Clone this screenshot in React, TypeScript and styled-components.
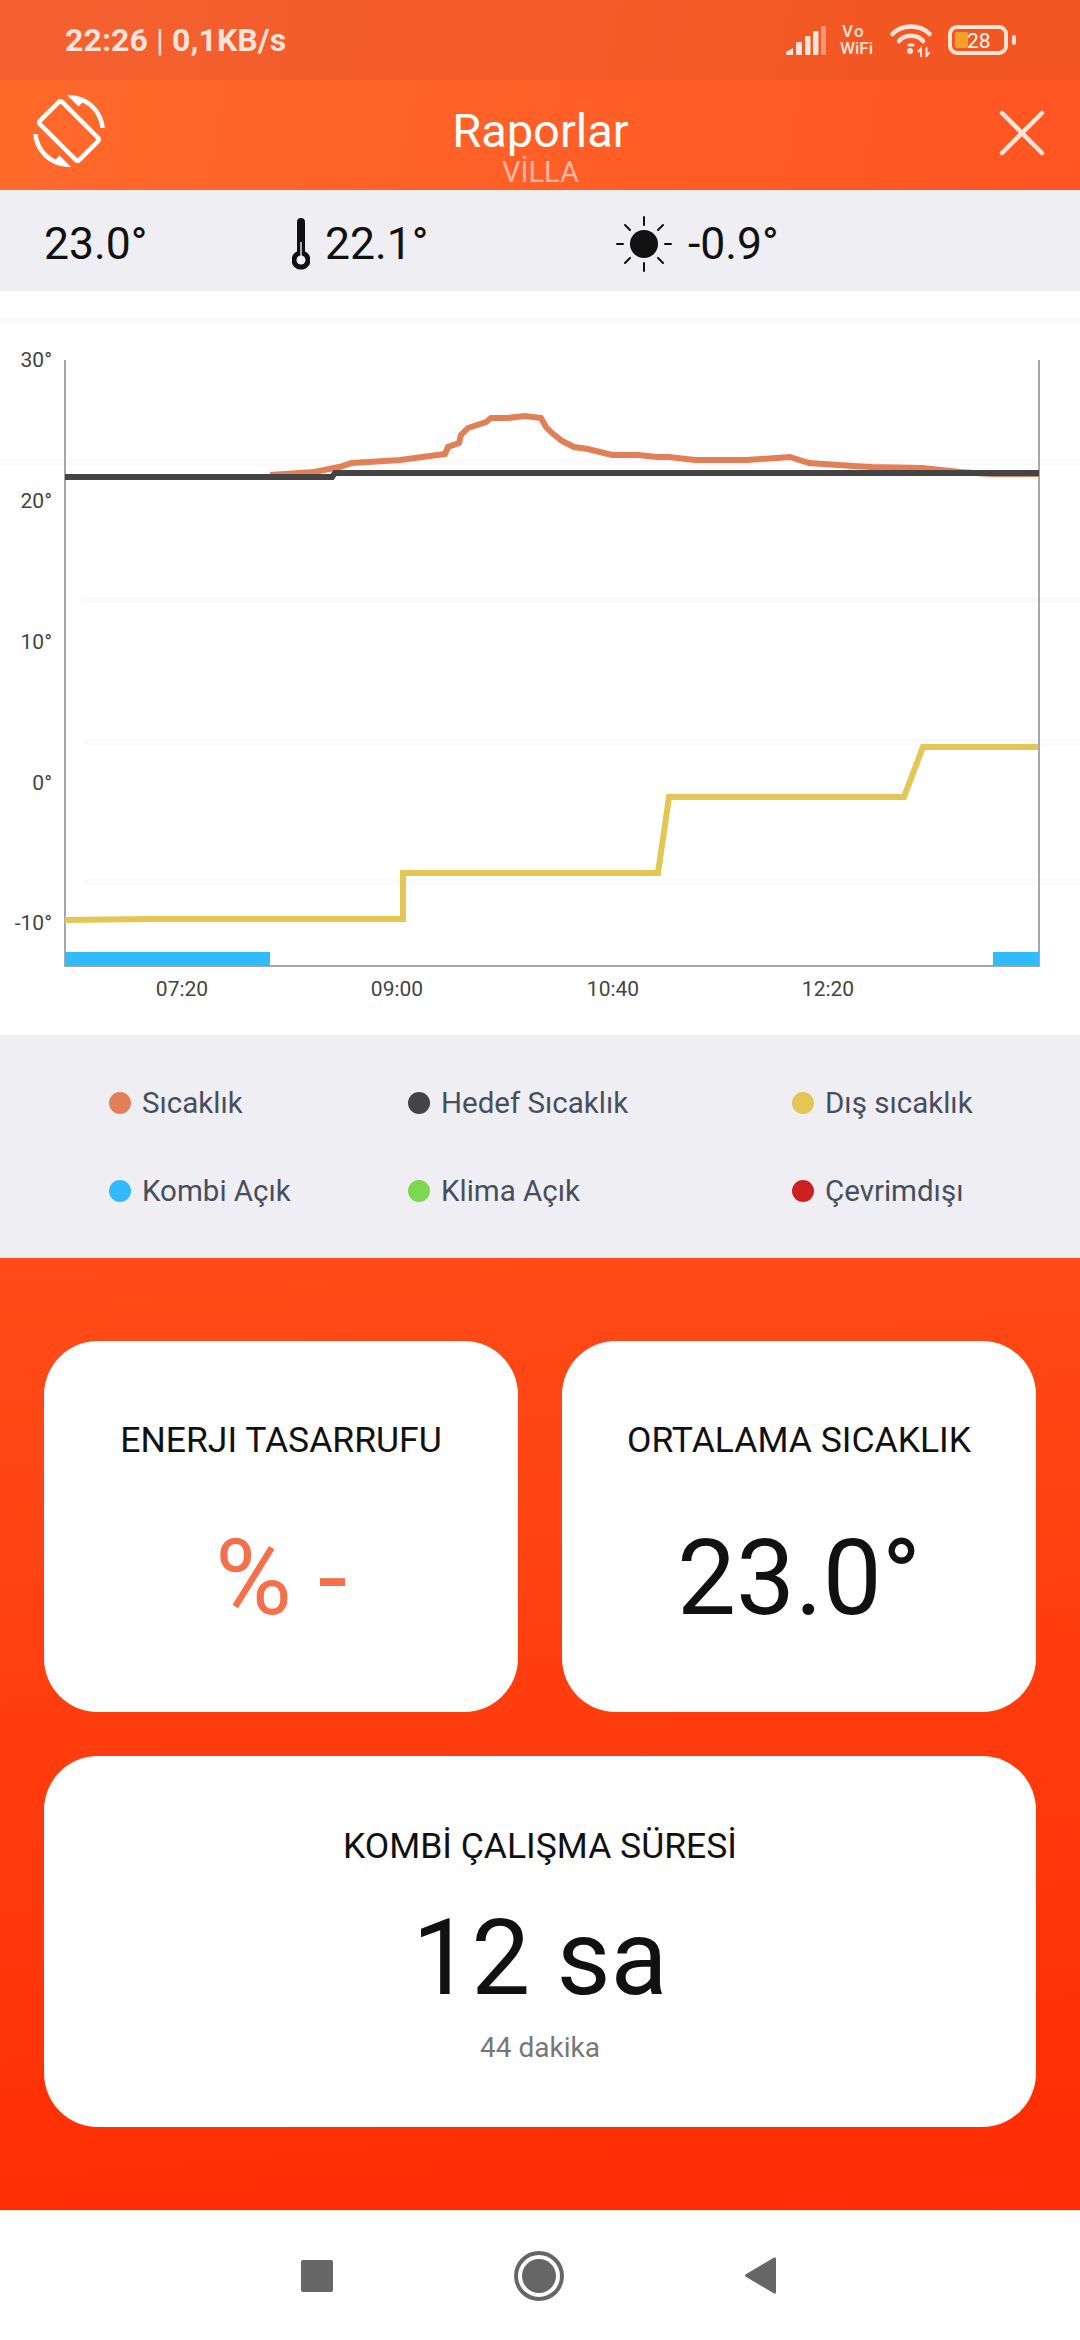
import React from "react";
import styled, { createGlobalStyle } from "styled-components";

const Global = createGlobalStyle`
  html, body { margin: 0; padding: 0; background: #fff; }
  * { box-sizing: border-box; }
  body { font-family: Roboto, "Noto Sans", sans-serif; }
`;
const Page = styled.div`width:1080px;height:2340px;display:flex;flex-direction:column;overflow:hidden;background:#fff;`;
const StatusBar = styled.div`height:80px;display:flex;align-items:center;justify-content:space-between;padding:0 64px 0 65px;background:linear-gradient(100deg,#f46130,#f25520);color:#fde3d8;`;
const StatusText = styled.div`font-size:32px;font-weight:700;letter-spacing:.1px;`;
const Separator = styled.span`font-weight:400;`;
const StatusIcons = styled.div`display:flex;align-items:center;gap:14px;`;
const VoWifiLabel = styled.div`width:36px;display:flex;flex-direction:column;align-items:flex-start;font-size:17px;font-weight:500;line-height:17px;color:#fde3d8;white-space:nowrap;`;
const VoLine = styled.span`letter-spacing:1.5px;padding-left:2px;`;
const Header = styled.div`height:110px;display:grid;grid-template-columns:1fr auto 1fr;align-items:center;padding:0 35px 6px 33px;background:linear-gradient(100deg,#ff6a2b,#ff5522);`;
const HeaderEnd = styled.div`display:flex;justify-content:flex-end;`;
const TitleBlock = styled.div`align-self:start;padding:25px 0 0 3px;display:flex;flex-direction:column;align-items:center;color:#fff;`;
const Title = styled.div`font-size:47px;line-height:52px;`;
const Subtitle = styled.div`font-size:29px;line-height:26px;color:#ffb9a0;margin-top:2px;`;
const StatsBar = styled.div`height:101px;background:#efeff3;display:grid;grid-template-columns:248px 324px 1fr;align-items:center;padding:6px 0 0 44px;color:#111;font-size:44.5px;`;
const Stat = styled.div`display:flex;align-items:center;`;
const ChartArea = styled.div`height:744px;background:#fff;`;
const Legend = styled.div`height:223px;background:#efeff3;display:grid;grid-template-columns:299px 384px 1fr;grid-template-rows:88px 88px;align-content:center;padding:0 0 0 109px;`;
const LegendItem = styled.div`display:flex;align-items:center;gap:11px;font-size:29.5px;color:#474e5e;`;
const Dot = styled.span<{ $c: string }>`width:22px;height:22px;border-radius:50%;background:${(p) => p.$c};`;
const Reports = styled.div`height:952px;background:linear-gradient(175deg,#ff4c18,#ff2c03);padding:83px 44px 0;display:grid;grid-template-columns:474px 474px;grid-template-rows:371px 371px;gap:44px;`;
const Card = styled.div<{ $wide?: boolean }>`background:#fff;border-radius:54px;display:flex;flex-direction:column;align-items:center;${(p) => (p.$wide ? "grid-column:1 / span 2;" : "")}`;
const CardTitle = styled.div<{ $wide?: boolean }>`font-size:35.5px;color:#111;line-height:40px;margin-top:${(p) => (p.$wide ? "70px" : "79px")};`;
const Big = styled.div<{ $accent?: boolean; $wide?: boolean }>`font-size:105px;line-height:120px;color:${(p) => (p.$accent ? "#f4704a" : "#111")};margin-top:${(p) => (p.$wide ? "33px" : "59px")};`;
const Note = styled.div`font-size:28px;color:#777;line-height:32px;margin-top:13px;`;
const NavBar = styled.div`flex:1;background:#fff;border-top:1px solid #f5e6e0;display:flex;justify-content:center;align-items:center;gap:181px;padding-right:3px;`;

const temp = "270,475 314,472 339,467 352,463 400,460 445,454 448,447 459,443 461,435 468,428 486,422 491,418 507,418 525,416 541,418 546,427 552,433 562,441 574,447 588,449 612,455 638,455 657,457 669,457 695,460 747,460 790,457 809,463 853,466 872,467 922,468 960,472 991,474 1038,474";
const target = "65,477 332,477 335,473 1039,473";
const outside = "65,920 148,919 403,919 403,873 658,873 669,797 904,797 923,747 1038,747";

function Rotate() {
  return (
    <svg width="72" height="72" viewBox="0 0 24 24" fill="#fff">
      <path d="M16.48 2.52c3.27 1.55 5.61 4.72 5.97 8.48h1.5C23.44 4.84 18.29 0 12 0l-.66.03 3.81 3.81 1.33-1.32zm-6.25-.77c-.59-.59-1.54-.59-2.12 0L1.75 8.11c-.59.59-.59 1.54 0 2.12l12.02 12.02c.59.59 1.54.59 2.12 0l6.36-6.36c.59-.59.59-1.54 0-2.12L10.23 1.75zm4.6 19.44L2.81 9.17l6.36-6.36 12.02 12.02-6.36 6.36zm-7.31.29C4.25 19.94 1.91 16.76 1.55 13H.05C.56 19.16 5.71 24 12 24l.66-.03-3.81-3.81-1.33 1.32z" />
    </svg>
  );
}
function Close() {
  return (
    <svg width="46" height="46" viewBox="0 0 46 46" stroke="#ffe4da" strokeWidth="4.5" strokeLinecap="round">
      <path d="M3 3L43 43M43 3L3 43" />
    </svg>
  );
}
function Signal() {
  return (
    <svg width="40" height="29" viewBox="0 0 40 29" fill="#fde3d8">
      <path d="M0 26l7-4v7H1a1 1 0 0 1-1-1z" /><rect x="10" y="16" width="6" height="13" rx="1" /><rect x="19" y="10" width="5.5" height="19" rx="1" /><rect x="27" y="5" width="5.5" height="24" rx="1" /><rect x="35" y="0" width="5" height="29" rx="1" opacity=".45" />
    </svg>
  );
}
function VoWifi() {
  return (
    <VoWifiLabel><VoLine>Vo</VoLine><span>WiFi</span></VoWifiLabel>
  );
}
function Wifi() {
  return (
    <svg width="42" height="33" viewBox="0 0 42 33" fill="none" stroke="#fde3d8" strokeWidth="4.5" strokeLinecap="round">
      <path d="M2.5 10C12 0 30 0 39.5 10" /><path d="M9 17C15 10 27 10 33 17" />
      <path d="M19 21h4" strokeWidth="3" />
      <circle cx="20" cy="27" r="3" fill="#fde3d8" stroke="none" />
      <path d="M31 32.500v-8l-2.500 3M36.500 24v8l2.500-3" strokeWidth="2" />
    </svg>
  );
}
function Battery() {
  return (
    <svg width="68" height="30" viewBox="0 0 68 30" style={{ marginLeft: 2 }}>
      <rect x="2" y="2" width="56" height="26" rx="7" fill="none" stroke="#fde3d8" strokeWidth="4" />
      <rect x="7" y="7" width="13" height="16" rx="2" fill="#f6a02a" />
      <text x="19" y="23" fontFamily="Roboto" fontSize="21" fill="#fff">28</text>
      <rect x="64" y="10" width="4" height="10" rx="2" fill="#fde3d8" />
    </svg>
  );
}
function Thermo() {
  return (
    <svg width="18" height="52" viewBox="0 0 18 52" style={{ marginRight: 15 }}>
      <path d="M5 4a4 4 0 0 1 8 0v29.500a9.500 9.500 0 1 1-8 0z" fill="#111" />
      <circle cx="9" cy="42" r="4.500" fill="#efeff3" />
      <rect x="8.300" y="24" width="1.400" height="16" fill="#efeff3" />
    </svg>
  );
}
function Sun() {
  return (
    <svg width="56" height="56" viewBox="0 0 56 56" stroke="#111" strokeWidth="2" strokeLinecap="round" style={{ marginRight: 16 }}>
      <circle cx="28" cy="28" r="14" fill="#111" stroke="none" />
      <path d="M28 1v8M28 47v8M1 28h6M49 28h6M9 9l5 5M47 9l-5 5M9 47l5-5M47 47l-5-5" />
    </svg>
  );
}
function Chart() {
  const label = { fontFamily: "Roboto", fontSize: 21, fill: "#444" };
  return (
    <svg width="1080" height="744" viewBox="0 291 1080 744">
      <g fill="#fafafa">
        <rect x="0" y="318" width="1080" height="6" />
        <rect x="0" y="459" width="1080" height="6" />
        <rect x="83" y="597" width="997" height="6" />
        <rect x="83" y="739" width="997" height="6" />
        <rect x="83" y="879" width="997" height="6" />
      </g>
      <path d="M65 360V966H1039V360" fill="none" stroke="#8a8a8a" strokeWidth="1.5" />
      <rect x="65" y="952" width="205" height="14" fill="#31bafc" />
      <rect x="993" y="952" width="46" height="14" fill="#31bafc" />
      <polyline points={temp} fill="none" stroke="#e37f56" strokeWidth="6" />
      <polyline points={target} fill="none" stroke="#444444" strokeWidth="6" />
      <polyline points={outside} fill="none" stroke="#e4c654" strokeWidth="6" />
      <g {...label} textAnchor="end">
        <text x="52" y="367">30°</text>
        <text x="52" y="508">20°</text>
        <text x="52" y="649">10°</text>
        <text x="52" y="790">0°</text>
        <text x="52" y="930">-10°</text>
      </g>
      <g {...label} textAnchor="middle">
        <text x="182" y="996">07:20</text>
        <text x="397" y="996">09:00</text>
        <text x="613" y="996">10:40</text>
        <text x="828" y="996">12:20</text>
      </g>
    </svg>
  );
}
function NavSquare() {
  return <svg width="32" height="32" viewBox="0 0 32 32"><rect width="32" height="32" rx="2" fill="#666" /></svg>;
}
function NavHome() {
  return (
    <svg width="50" height="50" viewBox="0 0 50 50">
      <circle cx="25" cy="25" r="23" fill="none" stroke="#666" strokeWidth="4" />
      <circle cx="25" cy="25" r="17" fill="#666" />
    </svg>
  );
}
function NavBack() {
  return <svg width="31" height="37" viewBox="0 0 31 37"><path d="M29 .6a1.300 1.300 0 0 1 2 1v33.800a1.300 1.300 0 0 1-2 1L.8 19.700a1.300 1.300 0 0 1 0-2.400z" fill="#666" /></svg>;
}

const legend = [
  ["Sıcaklık", "#e37f56"],
  ["Hedef Sıcaklık", "#444444"],
  ["Dış sıcaklık", "#e4c654"],
  ["Kombi Açık", "#31bafc"],
  ["Klima Açık", "#7bd850"],
  ["Çevrimdışı", "#cf2020"],
];

export default function App() {
  return (
    <Page>
      <Global />
      <StatusBar>
        <StatusText>22:26 <Separator>|</Separator> 0,1KB/s</StatusText>
        <StatusIcons><Signal /><VoWifi /><Wifi /><Battery /></StatusIcons>
      </StatusBar>
      <Header>
        <div><Rotate /></div>
        <TitleBlock><Title>Raporlar</Title><Subtitle>VİLLA</Subtitle></TitleBlock>
        <HeaderEnd><Close /></HeaderEnd>
      </Header>
      <StatsBar>
        <Stat>23.0°</Stat>
        <Stat><Thermo />22.1°</Stat>
        <Stat><Sun />-0.9°</Stat>
      </StatsBar>
      <ChartArea><Chart /></ChartArea>
      <Legend>
        {legend.map(([t, c]) => (
          <LegendItem key={t}><Dot $c={c} />{t}</LegendItem>
        ))}
      </Legend>
      <Reports>
        <Card><CardTitle>ENERJI TASARRUFU</CardTitle><Big $accent>% -</Big></Card>
        <Card><CardTitle>ORTALAMA SICAKLIK</CardTitle><Big>23.0°</Big></Card>
        <Card $wide><CardTitle $wide>KOMBİ ÇALIŞMA SÜRESİ</CardTitle><Big $wide>12 sa</Big><Note>44 dakika</Note></Card>
      </Reports>
      <NavBar><NavSquare /><NavHome /><NavBack /></NavBar>
    </Page>
  );
}
